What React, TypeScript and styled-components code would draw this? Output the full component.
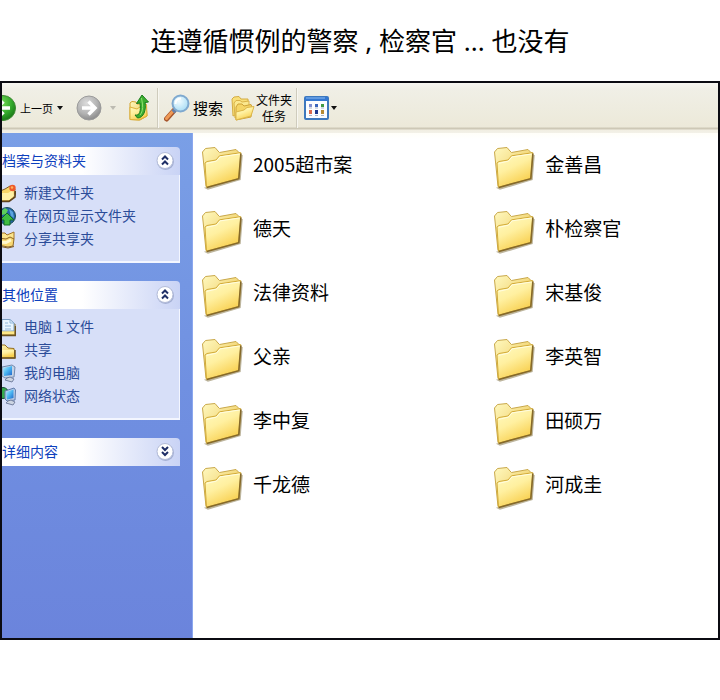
import React from "react";
import styled, { createGlobalStyle } from "styled-components";

const GlobalStyle = createGlobalStyle`
  * { box-sizing: border-box; }
  body { margin: 0; background: #fff; color: #000; font-family: "Noto Sans CJK SC", "Noto Sans", sans-serif; }
  button { padding: 0; border: 0; background: none; color: inherit; font: inherit; cursor: pointer; }
  svg { display: block; flex: none; }
`;

const Page = styled.div`
  display: flex;
  flex-direction: column;
  min-height: 100vh;
  padding-bottom: 60px;
`;
const Caption = styled.h1`
  margin: 0;
  padding: 21px 0 20px;
  font-family: "Noto Sans", "Noto Sans CJK SC", sans-serif;
  font-size: 26px;
  line-height: 40px;
  font-weight: 400;
  text-align: center;
`;
const Explorer = styled.main`
  flex: 1;
  display: flex;
  flex-direction: column;
  border: 2px solid #0b0b12;
  overflow: hidden;
`;
const Toolbar = styled.div`
  display: flex;
  align-items: center;
  height: 50px;
  background: linear-gradient(#f6f5f0 0, #f0efe6 6px, #ece9d9 44px, #cdc8b6 45px, #cdc8b6 46px, #f1eee2 47px, #f3f1e8 50px);
`;
const ToolButton = styled.button<{ $gap: number; $after: number }>`
  display: flex;
  align-items: center;
  gap: ${(p) => p.$gap}px;
  margin-right: ${(p) => p.$after}px;
`;
const ToolLabel = styled.span<{ $size: number }>`
  padding-bottom: 1px;
  font-size: ${(p) => p.$size}px;
  line-height: 16px;
  font-weight: 400;
  white-space: nowrap;
  text-align: center;
`;
const Divider = styled.span<{ $after: number }>`
  width: 2px;
  height: 40px;
  margin-right: ${(p) => p.$after}px;
  border-left: 1px solid #cfccbd;
  border-right: 1px solid #f8f7f1;
`;
const Workspace = styled.div`
  flex: 1;
  display: flex;
`;
const Sidebar = styled.aside`
  flex: none;
  width: 191px;
  display: flex;
  flex-direction: column;
  gap: 18px;
  padding: 14px 12px 14px 0;
  border-right: 1px solid #8ba7ee;
  background: linear-gradient(#7a9fe6, #7090e1 50%, #6b84dc);
`;
const Panel = styled.section`
  min-width: 0;
`;
const PanelHeader = styled.button`
  display: flex;
  align-items: center;
  justify-content: space-between;
  width: 100%;
  height: 28px;
  padding-right: 5px;
  border-radius: 0 4px 0 0;
  background: linear-gradient(90deg, #fff 45%, #c9d3f5);
  color: #0d40bd;
  font-size: 14px;
  line-height: 26px;
`;
const PanelTitle = styled.span`
  padding-bottom: 2px;
`;
const PanelList = styled.ul`
  margin: 0;
  padding: 7px 0 10px;
  list-style: none;
  background: #d7dff8;
  border-right: 1px solid #f3f6ff;
  border-bottom: 2px solid #f3f6ff;
`;
const PanelLink = styled.a`
  display: flex;
  align-items: center;
  gap: 8px;
  height: 23px;
  color: #2b4c98;
  font-size: 14px;
  line-height: 21px;
  text-decoration: none;
`;
const PanelLinkText = styled.span`
  padding-bottom: 2px;
`;
const Files = styled.div`
  flex: 1;
  display: grid;
  grid-template-columns: 13fr 10fr;
  grid-auto-rows: 64px;
  align-content: start;
  padding: 3px 0 0 8px;
  background: linear-gradient(#fffef8, #fff 6px);
`;
const FileButton = styled.button`
  display: flex;
  align-items: center;
  gap: 10px;
  text-align: left;
`;
const FileLabel = styled.span`
  padding-bottom: 8px;
  font-size: 19px;
  line-height: 28px;
`;

const Gradients = () => (
  <svg width="0" height="0" aria-hidden="true">
    <defs>
      <linearGradient id="folderFront" x1="0" y1="0" x2="0.5" y2="1">
        <stop offset="0" stopColor="#fffbc4" />
        <stop offset="0.5" stopColor="#fff0a0" />
        <stop offset="1" stopColor="#f8cf4e" />
      </linearGradient>
      <linearGradient id="folderBack" x1="0" y1="0" x2="1" y2="1">
        <stop offset="0" stopColor="#fff9c0" />
        <stop offset="1" stopColor="#e9bd42" />
      </linearGradient>
      <radialGradient id="green" cx="0.4" cy="0.3" r="0.75">
        <stop offset="0" stopColor="#7ee05e" />
        <stop offset="0.6" stopColor="#33a92b" />
        <stop offset="1" stopColor="#167114" />
      </radialGradient>
      <radialGradient id="grey" cx="0.4" cy="0.3" r="0.75">
        <stop offset="0" stopColor="#dcdcdc" />
        <stop offset="0.6" stopColor="#b2b2b2" />
        <stop offset="1" stopColor="#858585" />
      </radialGradient>
      <radialGradient id="lens" cx="0.4" cy="0.35" r="0.7">
        <stop offset="0" stopColor="#f2fcff" />
        <stop offset="1" stopColor="#a5dbf4" />
      </radialGradient>
      <linearGradient id="screen" x1="0" y1="0" x2="1" y2="1">
        <stop offset="0" stopColor="#b9f1ff" />
        <stop offset="0.5" stopColor="#49b5f2" />
        <stop offset="1" stopColor="#1f62c8" />
      </linearGradient>
    </defs>
  </svg>
);

const FolderIcon = () => (
  <svg width="42" height="44" viewBox="0 0 42 44" aria-hidden="true">
    <path d="M5 42 L38 33 L41 9 L39 33.500 L7 43Z" fill="#8a7c50" stroke="#8a7c50" strokeWidth="1.500" opacity="0.55" />
    <path d="M1.500 6 L4.500 2.500 L14 1.500 L17 5 L18.500 6.500 L35 3.500 L38 6.500 L39.500 7 L37 32 L5 40.500Z" fill="url(#folderBack)" stroke="#c9a84a" />
    <path d="M4 17 L6 15.500 L15 14 L18.500 9.800 L39.800 6.700 L37.800 32.500 L5.500 41.200Z" fill="url(#folderFront)" stroke="#d3ab38" />
    <path d="M5.500 17.400 L15.500 15.100 L19 10.900 L38.500 8" fill="none" stroke="#fffde0" />
    <path d="M5.800 41.400 L37.800 32.700 L39.900 7.500" fill="none" stroke="#85692a" strokeWidth="1.600" />
  </svg>
);

const BackIcon = () => (
  <svg width="14" height="28" viewBox="12 0 14 28" aria-hidden="true">
    <circle cx="13" cy="14" r="12.500" fill="url(#green)" stroke="#3f8a35" />
    <path d="M20 14H8M13.500 7.500L7 14L13.500 20.500" fill="none" stroke="#fff" strokeWidth="3.500" />
  </svg>
);
const ForwardIcon = () => (
  <svg width="26" height="28" viewBox="0 0 26 28" aria-hidden="true">
    <circle cx="13" cy="14" r="12" fill="url(#grey)" stroke="#9b9b9b" />
    <path d="M6 14H18M12.500 7.500L19 14L12.500 20.500" fill="none" stroke="#fff" strokeWidth="3.500" />
  </svg>
);
const Caret = ({ color = "#111" }: { color?: string }) => (
  <svg width="6" height="4" viewBox="0 0 6 4" aria-hidden="true">
    <path d="M0 0H6L3 4Z" fill={color} />
  </svg>
);
const UpIcon = () => (
  <svg width="22" height="28" viewBox="0 0 22 28" aria-hidden="true">
    <path d="M2 9 L4 7.500 L8 8 L9 10 L18 10 L19 22 L12 26 L2 25.500Z" fill="url(#folderBack)" stroke="#d3a22b" />
    <path d="M2 13 L9 15 L12 13 L18.500 10.500 L19 22 L11 26 L2 25.500Z" fill="url(#folderFront)" stroke="#ddb13a" />
    <path d="M7 21 C12 22 13 17 12 9 L8.500 9.500 L14 1 L20.500 8 L17 8.500 C18.500 16 15.500 24 9.500 24Z" fill="#3cae30" stroke="#187b1b" />
    <path d="M13.500 4 L14.500 10 C15 15 14 19 12 21" fill="none" stroke="#91df70" />
  </svg>
);
const SearchIcon = () => (
  <svg width="26" height="28" viewBox="0 0 26 28" aria-hidden="true">
    <path d="M2.500 25 L10 16.500" stroke="#a7562d" strokeWidth="5" strokeLinecap="round" />
    <path d="M2.500 24.500 L9 17" stroke="#ef9a55" strokeWidth="3" strokeLinecap="round" />
    <path d="M9 18 L11.500 15.500" stroke="#667fa5" strokeWidth="4" />
    <circle cx="16.500" cy="9.500" r="8" fill="url(#lens)" stroke="#7fa9cf" strokeWidth="2" />
    <path d="M11.500 10 C11.500 6 14 4.500 17 4.500" fill="none" stroke="#fff" strokeWidth="2" />
  </svg>
);
const FoldersIcon = () => (
  <svg width="24" height="26" viewBox="0 0 24 26" aria-hidden="true">
    <path d="M1 4 L3 2 L8 1.500 L10 4 L17 4 L17 14 L2 21Z" fill="#f8df79" stroke="#d4ac43" />
    <path d="M3 8 L5 5.500 L9 5.500 L11 7 L18 6 L18 15 L4 23Z" fill="#fbe88e" stroke="#d9b249" />
    <path d="M5 12 L7 9 L11 9 L13 11 L20 9.500 L21 12 L20 22 L5 25Z" fill="#f5d566" stroke="#cea237" />
    <path d="M5 17 L13 15 L16 12.500 L23 11.500 L20 21 L5 25Z" fill="url(#folderFront)" stroke="#dcb64a" />
  </svg>
);
const ViewsIcon = () => (
  <svg width="25" height="24" viewBox="0 0 25 24" aria-hidden="true">
    <rect x="1" y="1" width="23" height="22" rx="1" fill="#fbfdff" stroke="#3d78bd" strokeWidth="2" />
    <rect x="1" y="1" width="23" height="4" fill="#3578d0" />
    <path d="M2 2H21" stroke="#8dbcf1" />
    <rect x="5" y="8" width="3" height="3" fill="#7f8fd0" />
    <rect x="11" y="8" width="3" height="3" fill="#3865bd" />
    <rect x="17" y="8" width="3" height="3" fill="#3f9a43" />
    <rect x="5" y="14" width="3" height="4" fill="#d9684b" />
    <rect x="11" y="14" width="3" height="4" fill="#20398d" />
    <rect x="17" y="14" width="3" height="4" fill="#b58b34" />
    <path d="M5 12h3M11 12h3M17 12h3M5 19.500h3M11 19.500h3M17 19.500h3" stroke="#aab5c7" />
  </svg>
);
const ChevronBadge = ({ down = false }: { down?: boolean }) => (
  <svg width="20" height="20" viewBox="0 0 20 20" aria-hidden="true">
    <circle cx="10.500" cy="10.500" r="8.500" fill="#8794bd" opacity="0.6" />
    <circle cx="10" cy="9.500" r="8" fill="#fff" stroke="#b3bcd8" />
    <path
      d={down ? "M7 5L10 8L13 5M7 10L10 13L13 10" : "M7 8.500L10 5.500L13 8.500M7 13.500L10 10.500L13 13.500"}
      fill="none"
      stroke="#1f2f66"
      strokeWidth="2"
    />
  </svg>
);

type Glyph = "new" | "web" | "share" | "doc" | "folder" | "computer" | "network";
const glyphs: Record<Glyph, React.ReactNode> = {
  new: (
    <>
      <path d="M-4 8 L3 5 L8 2 L13 5 L12 13 L7 17 L-4 17Z" fill="#f7d568" stroke="#7e5a20" />
      <path d="M-4 9 L6 9 L11 6 L12 12 L7 16 L-4 16Z" fill="#fff0a5" />
      <path d="M-4 17.500 L7 17.500 L13 13 L13.500 7" fill="none" stroke="#5f431c" strokeWidth="1.500" />
      <circle cx="10.500" cy="4" r="3.200" fill="#ee5a2c" />
      <circle cx="10" cy="3.500" r="1.200" fill="#ffb35d" />
    </>
  ),
  web: (
    <>
      <circle cx="5" cy="9" r="8.500" fill="#2463a8" stroke="#1c4d55" />
      <path d="M-2 5 L3 1 L6 3 L4 7 L0 8Z" fill="#5dcf5b" />
      <path d="M7 2 L11 5 L12 11 L9 9Z" fill="#5aa4dd" />
      <path d="M5 6 L12 13 H8 V18 H2 V13 H-2Z" fill="#3fbe42" stroke="#126d27" />
    </>
  ),
  share: (
    <>
      <path d="M-4 3 L3 3 L5 5 L12 2 L12 9 L-4 10Z" fill="#fbe58d" stroke="#a37429" />
      <path d="M-4 8 L4 9 L8 7 L12 9 L11 16 L6 17 L-4 15Z" fill="#f7d873" stroke="#8f6726" />
      <path d="M-2 12 L4 12.500 L9 10" fill="none" stroke="#fff8d0" strokeWidth="3" />
      <path d="M-4 16 L6 18 L12 16.500" fill="none" stroke="#7d5a24" />
    </>
  ),
  doc: (
    <>
      <path d="M-4 6 H13 V17 H-4Z" fill="#f7dd7c" stroke="#8a6c28" />
      <path d="M0 1.500 H8 L12 5 V13 H0Z" fill="#e8f5ff" stroke="#7c9fc4" />
      <path d="M8 1.500 V5 H12M3 5H6M3 8H9M3 11H9" fill="none" stroke="#91b7d9" />
      <path d="M-4 13.500 H12 V16 H-4Z" fill="#ffe887" />
      <path d="M-4 17.500 H13.500 V8" fill="none" stroke="#6c5424" strokeWidth="1.500" />
    </>
  ),
  folder: (
    <>
      <path d="M-4 4 L3 4 L6 7 L12 7.500 L13 17 L-4 17Z" fill="url(#folderBack)" stroke="#96701f" />
      <path d="M-4 9 L12 9 L12 16 L-4 16Z" fill="url(#folderFront)" />
      <path d="M-4 17 H13 V9" fill="none" stroke="#6c5424" strokeWidth="1.500" />
    </>
  ),
  computer: (
    <>
      <path d="M0 3 L10 1 L13 3 L12 13 L3 14 L0 12Z" fill="#c4d3e6" stroke="#7289ae" />
      <path d="M1 4 L10 2 L10 11 L2 12Z" fill="url(#screen)" />
      <path d="M5 14 L3 16 L10 18 L12 15 L8 13Z" fill="#cdd5e2" stroke="#7480a0" />
    </>
  ),
  network: (
    <>
      <circle cx="1" cy="6" r="5.500" fill="#36a94d" stroke="#184f38" />
      <path d="M3 4 L12 1 L13.500 3 L13 13 L5 14 L3 12Z" fill="#b9cce6" stroke="#607bab" />
      <path d="M4 5 L11.500 2.500 L11.500 11 L5 12.500Z" fill="url(#screen)" />
      <path d="M6 14 L4 16 L11 18 L13 15 L9 13Z" fill="#cdd5e2" stroke="#7480a0" />
    </>
  ),
};

const panels: { title: string; items: [Glyph, string][] }[] = [
  { title: "档案与资料夹", items: [["new", "新建文件夹"], ["web", "在网页显示文件夹"], ["share", "分享共享夹"]] },
  { title: "其他位置", items: [["doc", "电脑 1 文件"], ["folder", "共享"], ["computer", "我的电脑"], ["network", "网络状态"]] },
  { title: "详细内容", items: [] },
];

const folders = [
  "2005超市案", "金善昌",
  "德天", "朴检察官",
  "法律资料", "宋基俊",
  "父亲", "李英智",
  "李中复", "田硕万",
  "千龙德", "河成圭",
];

export default function App() {
  return (
    <Page>
      <GlobalStyle />
      <Caption>连遵循惯例的警察 , 检察官 ... 也没有</Caption>
      <Explorer>
        <Toolbar role="toolbar">
          <ToolButton $gap={4} $after={13}>
            <BackIcon />
            <ToolLabel $size={11}>上一页</ToolLabel>
            <Caret />
          </ToolButton>
          <ToolButton $gap={8} $after={12} aria-label="前进">
            <ForwardIcon />
            <Caret color="#bdbbb2" />
          </ToolButton>
          <ToolButton $gap={0} $after={7} aria-label="向上">
            <UpIcon />
          </ToolButton>
          <Divider $after={5} />
          <ToolButton $gap={3} $after={8}>
            <SearchIcon />
            <ToolLabel $size={15}>搜索</ToolLabel>
          </ToolButton>
          <ToolButton $gap={1} $after={4}>
            <FoldersIcon />
            <ToolLabel $size={12}>
              文件夹
              <br />
              任务
            </ToolLabel>
          </ToolButton>
          <Divider $after={6} />
          <ToolButton $gap={2} $after={0} aria-label="查看">
            <ViewsIcon />
            <Caret />
          </ToolButton>
        </Toolbar>
        <Workspace>
          <Sidebar>
            {panels.map(({ title, items }) => (
              <Panel key={title}>
                <PanelHeader aria-expanded={items.length > 0}>
                  <PanelTitle>{title}</PanelTitle>
                  <ChevronBadge down={items.length === 0} />
                </PanelHeader>
                {items.length > 0 && (
                  <PanelList>
                    {items.map(([glyph, label]) => (
                      <li key={label}>
                        <PanelLink href="#">
                          <svg width="14" height="19" viewBox="0 0 14 19" aria-hidden="true">
                            {glyphs[glyph]}
                          </svg>
                          <PanelLinkText>{label}</PanelLinkText>
                        </PanelLink>
                      </li>
                    ))}
                  </PanelList>
                )}
              </Panel>
            ))}
          </Sidebar>
          <Files>
            {folders.map((name) => (
              <FileButton key={name}>
                <FolderIcon />
                <FileLabel>{name}</FileLabel>
              </FileButton>
            ))}
          </Files>
        </Workspace>
      </Explorer>
      <Gradients />
    </Page>
  );
}
